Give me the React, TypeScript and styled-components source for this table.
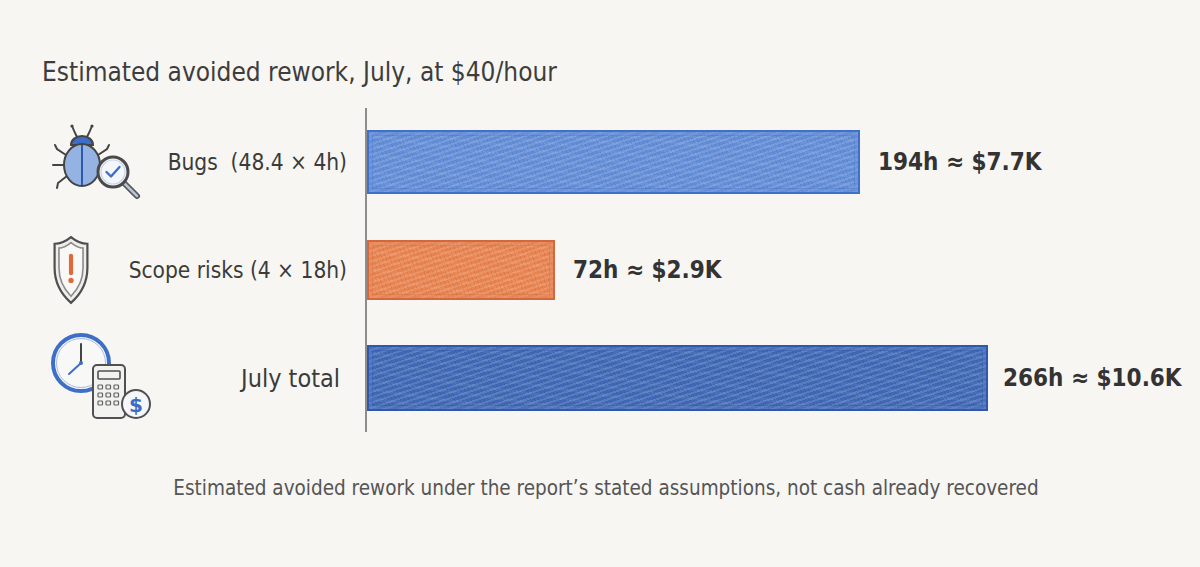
import React from 'react';
import styled, { createGlobalStyle } from 'styled-components';

const GlobalStyle = createGlobalStyle`
  html, body {
    margin: 0;
    padding: 0;
    background: #f7f6f3;
  }
`;

const FONT = `"DejaVu Sans Condensed", "Liberation Sans Narrow", Lato, "Open Sans", sans-serif`;

type RowData = {
  key: string;
  icon: React.ReactNode;
  label: string;
  value: string;
  width: number;
  color: string;
  edge: string;
  barHeight: number;
  iconPad: number;
  gap: number;
};

function BugIcon() {
  return (
    <svg width="95" height="80" viewBox="0 0 95 80">
      <path d="M27 15 Q24 9 22 4" stroke="#444" strokeWidth="2" fill="none" strokeLinecap="round" />
      <path d="M37 15 Q40 9 42 4" stroke="#444" strokeWidth="2" fill="none" strokeLinecap="round" />
      <circle cx="22" cy="4" r="1.6" fill="#444" />
      <circle cx="42" cy="4" r="1.6" fill="#444" />
      <path d="M16 33 L7 27 L5 23" stroke="#444" strokeWidth="2" fill="none" strokeLinecap="round" />
      <path d="M14 43 L3 43" stroke="#444" strokeWidth="2" fill="none" strokeLinecap="round" />
      <path d="M17 54 L8 61 L7 66" stroke="#444" strokeWidth="2" fill="none" strokeLinecap="round" />
      <path d="M48 33 L57 27 L59 23" stroke="#444" strokeWidth="2" fill="none" strokeLinecap="round" />
      <path d="M21 23 A11 9 0 0 1 43 23 Z" fill="#3e6fc8" stroke="#444" strokeWidth="2" />
      <ellipse cx="32" cy="43" rx="18" ry="21" fill="#94b2e2" stroke="#444" strokeWidth="2" />
      <path d="M32 23 L32 63" stroke="#2c5aaf" strokeWidth="2" />
      <path d="M74 61 L87 74" stroke="#555" strokeWidth="6" strokeLinecap="round" />
      <path d="M74 61 L87 74" stroke="#b9c3d3" strokeWidth="2.5" strokeLinecap="round" />
      <circle cx="63" cy="50" r="15" fill="#f4f6fa" stroke="#4a4a4a" strokeWidth="3" />
      <circle cx="63" cy="50" r="12" fill="none" stroke="#c7d3e8" strokeWidth="1.2" />
      <path d="M56.5 50 L61 54.5 L69.5 45" stroke="#3a6fcb" strokeWidth="2.4" fill="none" strokeLinecap="round" strokeLinejoin="round" />
    </svg>
  );
}

function ShieldIcon() {
  return (
    <svg width="38" height="70" viewBox="0 0 34 64">
      <path
        d="M17 2 C23 7 28 8 32 8 L32 30 C32 45 25 55 17 62 C9 55 2 45 2 30 L2 8 C6 8 11 7 17 2 Z"
        fill="#eeeeec"
        stroke="#4f4f4f"
        strokeWidth="2"
      />
      <path
        d="M17 7 C22 11 25 12 28 12 L28 30 C28 42 23 50 17 56 C11 50 6 42 6 30 L6 12 C9 12 12 11 17 7 Z"
        fill="#f8f8f6"
        stroke="#8c8c8c"
        strokeWidth="1.5"
      />
      <path d="M17 19 L17 35" stroke="#e0693a" strokeWidth="3.8" strokeLinecap="round" />
      <circle cx="17" cy="41.5" r="2.4" fill="#e0693a" />
    </svg>
  );
}

function ClockCalcIcon() {
  return (
    <svg width="112" height="96" viewBox="0 0 112 96">
      <circle cx="36" cy="33" r="28" fill="#f8f8f6" stroke="#3e6fc8" strokeWidth="4" />
      <circle cx="36" cy="33" r="24.5" fill="none" stroke="#a9bde0" strokeWidth="1" />
      <path d="M36 33 L36 14" stroke="#444" strokeWidth="2" strokeLinecap="round" />
      <path d="M36 33 L24 44" stroke="#3e6fc8" strokeWidth="2" strokeLinecap="round" />
      <circle cx="36" cy="33" r="2" fill="#3e6fc8" />
      <rect x="48" y="35" width="32" height="53" rx="4" fill="#f2f2f0" stroke="#505050" strokeWidth="2" />
      <rect x="53" y="41" width="22" height="8" rx="1" fill="none" stroke="#505050" strokeWidth="1.6" />
      {[0, 1, 2].map((r) =>
        [0, 1, 2].map((c) => (
          <rect
            key={`${r}-${c}`}
            x={53 + c * 8}
            y={55 + r * 8}
            width="4.5"
            height="4"
            rx="0.8"
            fill="none"
            stroke="#606060"
            strokeWidth="1.2"
          />
        ))
      )}
      <circle cx="91" cy="74" r="14" fill="#f5f7fb" stroke="#505050" strokeWidth="2" />
      <text
        x="91"
        y="81.5"
        textAnchor="middle"
        fontFamily="DejaVu Sans, sans-serif"
        fontSize="20"
        fontWeight="700"
        fill="#3a6cc6"
      >
        $
      </text>
    </svg>
  );
}

const rows: RowData[] = [
  {
    key: 'bugs',
    icon: <BugIcon />,
    label: 'Bugs  (48.4 × 4h)',
    value: '194h ≈ $7.7K',
    width: 493,
    color: '#628dd8',
    edge: '#3f71cb',
    barHeight: 64,
    iconPad: 8,
    gap: 18,
  },
  {
    key: 'scope',
    icon: <ShieldIcon />,
    label: 'Scope risks (4 × 18h)',
    value: '72h ≈ $2.9K',
    width: 188,
    color: '#e9834f',
    edge: '#d4683a',
    barHeight: 60,
    iconPad: 10,
    gap: 18,
  },
  {
    key: 'total',
    icon: <ClockCalcIcon />,
    label: 'July total',
    value: '266h ≈ $10.6K',
    width: 621,
    color: '#3f68b6',
    edge: '#2d58ab',
    barHeight: 66,
    iconPad: 3,
    gap: 15,
  },
];

export default function App() {
  return (
    <Page>
      <GlobalStyle />
      <Title>Estimated avoided rework, July, at $40/hour</Title>
      <Chart>
        {rows.map((row) => (
          <Row key={row.key}>
            <LabelCell>
              <IconBox $pad={row.iconPad}>{row.icon}</IconBox>
              <Label $tight={row.key === 'total'}>{row.label}</Label>
            </LabelCell>
            <PlotCell>
              <Bar $width={row.width} $height={row.barHeight} $color={row.color} $edge={row.edge} />
              <Value $gap={row.gap}>{row.value}</Value>
            </PlotCell>
          </Row>
        ))}
      </Chart>
      <Footnote>Estimated avoided rework under the report’s stated assumptions, not cash already recovered</Footnote>
    </Page>
  );
}

const Page = styled.div`
  width: 1200px;
  height: 567px;
  box-sizing: border-box;
  padding: 55px 0 0 42px;
  font-family: ${FONT};
  color: #3a3a3a;
  overflow: hidden;
`;

const Title = styled.div`
  font-size: 26px;
  line-height: 34px;
  color: #3d3d3d;
  margin-bottom: 19px;
`;

const Chart = styled.div`
  display: flex;
  flex-direction: column;
  width: 1120px;
`;

const Row = styled.div`
  display: grid;
  grid-template-columns: 323px 1fr;
  height: 108px;
`;

const LabelCell = styled.div`
  display: flex;
  align-items: center;
  justify-content: space-between;
  padding-right: 18px;
`;

const IconBox = styled.div<{ $pad: number }>`
  display: flex;
  align-items: center;
  padding-left: ${({ $pad }) => $pad}px;
`;

const Label = styled.div<{ $tight: boolean }>`
  font-size: ${({ $tight }) => ($tight ? '25px' : '22.5px')};
  color: #3b3b3b;
  white-space: pre;
  margin-right: ${({ $tight }) => ($tight ? '7px' : '0')};
`;

const PlotCell = styled.div`
  display: flex;
  align-items: center;
  border-left: 2px solid #8d8d8d;
`;

const Bar = styled.div<{ $width: number; $height: number; $color: string; $edge: string }>`
  box-sizing: border-box;
  width: ${({ $width }) => $width}px;
  height: ${({ $height }) => $height}px;
  background-color: ${({ $color }) => $color};
  background-image:
    repeating-linear-gradient(-18deg, rgba(255, 255, 255, 0.14) 0 2px, transparent 2px 5px),
    repeating-linear-gradient(72deg, rgba(0, 0, 0, 0.05) 0 1px, transparent 1px 4px),
    repeating-linear-gradient(8deg, rgba(255, 255, 255, 0.06) 0 3px, transparent 3px 9px);
  border: 2px solid ${({ $edge }) => $edge};
  box-shadow: inset 0 0 0 3px rgba(255, 255, 255, 0.1), inset 0 0 0 4px ${({ $edge }) => $edge}55;
`;

const Value = styled.div<{ $gap: number }>`
  margin-left: ${({ $gap }) => $gap}px;
  font-size: 24px;
  font-weight: 700;
  color: #333;
  white-space: nowrap;
`;

const Footnote = styled.div`
  margin-top: 42px;
  padding-right: 30px;
  text-align: center;
  font-size: 20.5px;
  line-height: 28px;
  color: #555;
  white-space: nowrap;
`;
